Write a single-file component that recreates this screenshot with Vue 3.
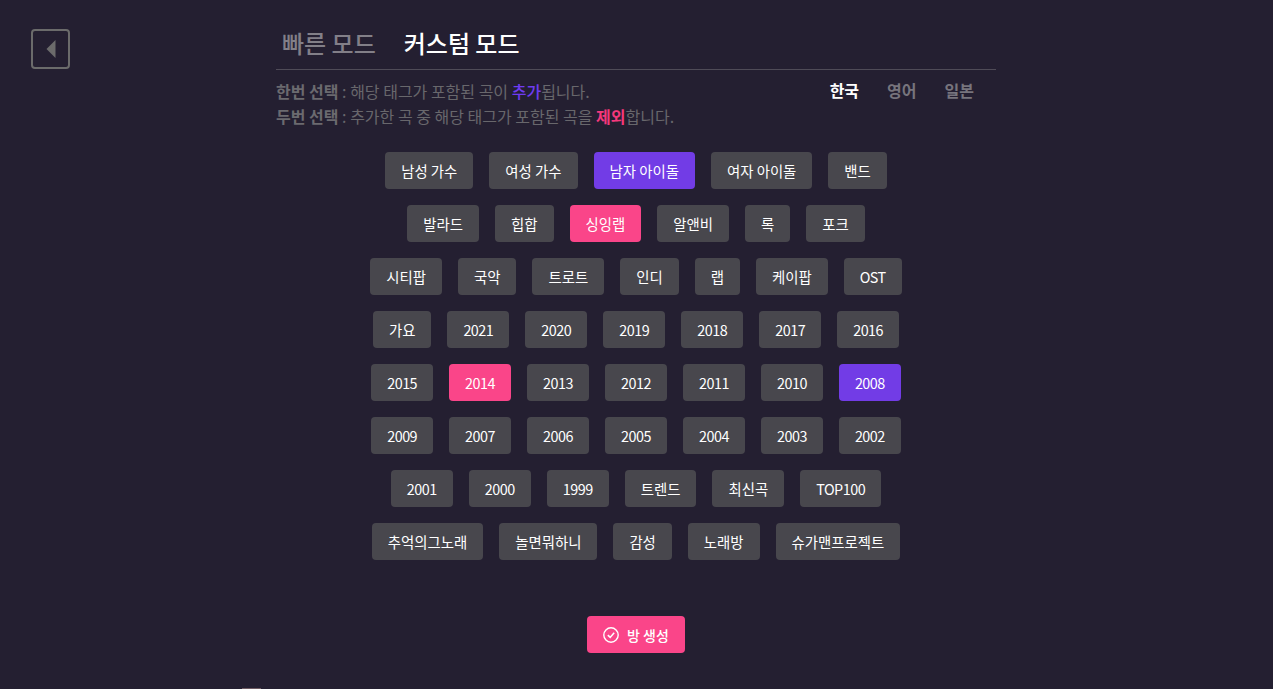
<script setup>
const rows = [
  [['남성 가수'], ['여성 가수'], ['남자 아이돌', 'add'], ['여자 아이돌'], ['밴드']],
  [['발라드'], ['힙합'], ['싱잉랩', 'del'], ['알앤비'], ['록'], ['포크']],
  [['시티팝'], ['국악'], ['트로트'], ['인디'], ['랩'], ['케이팝'], ['OST']],
  [['가요'], ['2021'], ['2020'], ['2019'], ['2018'], ['2017'], ['2016']],
  [['2015'], ['2014', 'del'], ['2013'], ['2012'], ['2011'], ['2010'], ['2008', 'add']],
  [['2009'], ['2007'], ['2006'], ['2005'], ['2004'], ['2003'], ['2002']],
  [['2001'], ['2000'], ['1999'], ['트렌드'], ['최신곡'], ['TOP100']],
  [['추억의그노래'], ['놀면뭐하니'], ['감성'], ['노래방'], ['슈가맨프로젝트']],
]

// latin and digit labels run a bit tighter than the hangul ones
const isLatin = (s) => /^[A-Z0-9]+$/.test(s)
</script>

<template>
  <div class="page">
    <button class="back">
      <svg width="10" height="18" viewBox="0 0 10 18"><path d="M9.5 0 V18 L0.5 9 Z" fill="#6b6b6b" /></svg>
    </button>
    <main class="panel">
      <div class="tabs">
        <span class="tab">빠른 모드</span>
        <span class="tab on">커스텀 모드</span>
      </div>
      <div class="info">
        <div class="help">
          <p><b>한번 선택</b> : 해당 태그가 포함된 곡이 <b class="purple">추가</b>됩니다.</p>
          <p><b>두번 선택</b> : 추가한 곡 중 해당 태그가 포함된 곡을 <b class="pink">제외</b>합니다.</p>
        </div>
        <div class="langs">
          <span class="on">한국</span>
          <span>영어</span>
          <span>일본</span>
        </div>
      </div>
      <div class="tags">
        <div class="row" v-for="(row, i) in rows" :key="i">
          <button
            v-for="t in row"
            :key="t[0]"
            class="tag"
            :class="[t[1], { latin: isLatin(t[0]) }]"
          >{{ t[0] }}</button>
        </div>
      </div>
      <div class="foot">
        <button class="create">
          <svg width="16" height="16" viewBox="0 0 16 16" fill="none" stroke="#fff" stroke-width="1.4">
            <circle cx="8" cy="8" r="7.2" />
            <path d="M4.8 8.2 L7.2 10.4 L11.2 5.8" stroke-width="1.6" />
          </svg>
          <span>방 생성</span>
        </button>
      </div>
    </main>
    <div class="peek"></div>
  </div>
</template>

<style>
html, body {
  background: #241f31;
  overflow: hidden;
}
</style>

<style scoped>
.page {
  height: 689px;
  padding-right: 1px;
  box-sizing: border-box;
  background: #241f31;
  font-family: "Noto Sans CJK KR", "Noto Sans", sans-serif;
  position: relative;
  overflow: hidden;
}

.back {
  position: absolute;
  left: 31px;
  top: 29px;
  width: 39px;
  height: 40px;
  box-sizing: border-box;
  background: none;
  border: 2px solid #6b6b6b;
  border-radius: 4px;
  display: flex;
  align-items: center;
  justify-content: center;
  padding: 0;
}

.peek {
  position: absolute;
  left: 242px;
  bottom: 0;
  width: 19px;
  height: 1px;
  background: #6d5a62;
}

.panel {
  width: 720px;
  margin: 0 auto;
  padding-top: 24px;
  box-sizing: border-box;
}

.tabs {
  display: flex;
  gap: 28px;
  padding: 0 6px;
  height: 45px;
  border-bottom: 1px solid #4f4b57;
}

.tab {
  font-size: 24px;
  line-height: 38px;
  font-weight: 500;
  color: #827f88;
}

.tab.on {
  color: #fff;
}

.info {
  display: flex;
  justify-content: space-between;
  padding-top: 9px;
}

.help p {
  margin: 0;
  font-size: 16px;
  line-height: 25px;
  color: #68676c;
}

.help b {
  font-weight: 700;
  color: #6b6a6f;
}

.help b.purple {
  font-weight: 500;
  color: #6f3cf2;
}

.help b.pink {
  color: #f5387c;
}

.langs {
  display: flex;
  gap: 28px;
  padding-right: 22px;
  font-size: 16px;
  line-height: 23px;
  font-weight: 700;
  color: #77747d;
}

.langs .on {
  color: #fff;
}

.tags {
  margin-top: 23px;
}

.row {
  display: flex;
  justify-content: center;
  gap: 16px;
  margin-bottom: 16px;
}

.tag {
  height: 37px;
  padding: 0 16px;
  border: none;
  border-radius: 4px;
  background: #48474d;
  color: #fff;
  font-family: inherit;
  font-size: 14.4px;
}

.tag.latin {
  letter-spacing: -0.5px;
}

.tag.add {
  background: #723ce6;
}

.tag.del {
  background: #fa4589;
}

.foot {
  display: flex;
  justify-content: center;
  margin-top: 56px;
}

.create {
  height: 37px;
  padding: 0 16px;
  border: none;
  border-radius: 4px;
  background: #fa4589;
  color: #fff;
  font-family: inherit;
  font-size: 14px;
  font-weight: 500;
  display: flex;
  align-items: center;
  gap: 8px;
}
</style>
